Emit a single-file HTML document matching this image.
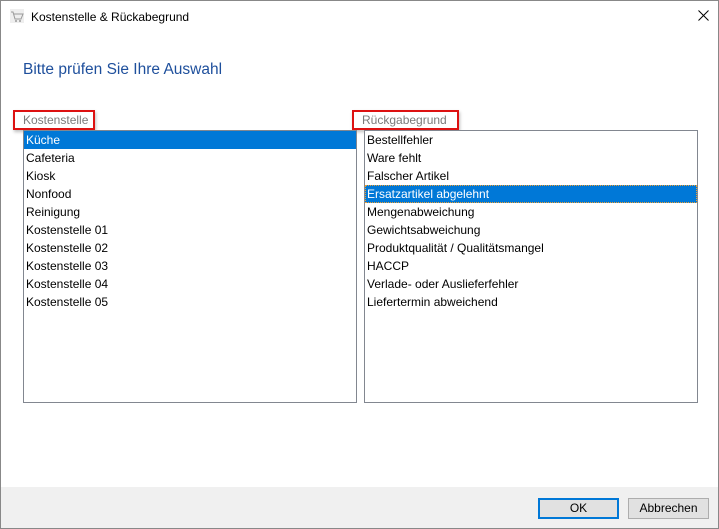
<!DOCTYPE html>
<html><head><style>
body{margin:0;width:719px;height:529px;overflow:hidden;font-family:"Liberation Sans","DejaVu Sans",sans-serif;background:#fff;position:relative}
.win{position:absolute;left:0;top:0;width:717px;height:527px;border:1px solid #888;background:#fff}
.t{position:absolute;font-size:12px;color:#000;white-space:nowrap}
.list{position:absolute;top:129px;height:271px;border:1px solid #828790;background:#fff}
.list div{height:18px;line-height:18px;font-size:12px;padding-left:2px;white-space:nowrap}
.sel{background:#0078d7;color:#fff}
.lbl{position:absolute;top:109px;height:16px;border:2px solid #d11;font-size:12px;color:#7a7a7a;line-height:16px;padding-left:8px;box-shadow:1px 2px 3px rgba(0,0,0,.25)}
.btn{position:absolute;top:497px;height:19px;width:79px;font-size:12px;text-align:center;line-height:19px;background:#e1e1e1;border:1px solid #adadad}
</style></head><body>
<div class="win">
<svg style="position:absolute;left:9px;top:8px" width="14" height="14" viewBox="0 0 14 14"><rect width="14" height="14" fill="#eee"/><path d="M1 3h2l2 7h6l2-5H4" fill="none" stroke="#999" stroke-width="1"/><circle cx="6" cy="12" r="1" fill="#999"/><circle cx="10" cy="12" r="1" fill="#999"/></svg>
<div class="t" style="left:30px;top:9px">Kostenstelle &amp; Rückabegrund</div>
<svg style="position:absolute;left:697px;top:9px" width="11" height="11"><path d="M0.5 0.5L10.5 10.5M10.5 0.5L0.5 10.5" stroke="#000" stroke-width="1"/></svg>
<div class="t" style="left:22px;top:60px;font-size:15.5px;color:#1e4f9c">Bitte prüfen Sie Ihre Auswahl</div>
<div class="lbl" style="left:12px;width:70px">Kostenstelle</div>
<div class="lbl" style="left:351px;width:95px">Rückgabegrund</div>
<div class="list" style="left:22px;width:332px">
<div class="sel">Küche</div><div>Cafeteria</div><div>Kiosk</div><div>Nonfood</div><div>Reinigung</div><div>Kostenstelle 01</div><div>Kostenstelle 02</div><div>Kostenstelle 03</div><div>Kostenstelle 04</div><div>Kostenstelle 05</div>
</div>
<div class="list" style="left:363px;width:332px">
<div>Bestellfehler</div><div>Ware fehlt</div><div>Falscher Artikel</div><div class="sel" style="outline:1px dotted #f0a030;outline-offset:-1px">Ersatzartikel abgelehnt</div><div>Mengenabweichung</div><div>Gewichtsabweichung</div><div>Produktqualität / Qualitätsmangel</div><div>HACCP</div><div>Verlade- oder Auslieferfehler</div><div>Liefertermin abweichend</div>
</div>
<div style="position:absolute;left:0;top:486px;width:717px;height:41px;background:#f0f0f0"></div>
<div class="btn" style="left:537px;border:1px solid #0078d7;box-shadow:inset 0 0 0 1px #0078d7">OK</div>
<div class="btn" style="left:627px">Abbrechen</div>
</div>
</body></html>
